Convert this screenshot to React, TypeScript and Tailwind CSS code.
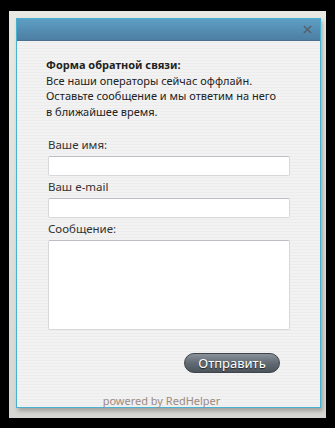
import React from 'react'

const Field = ({ label }: { label: string }): JSX.Element => {
    return (
        <div className="flex flex-col">
            <label className="h-[22px] leading-[22px] text-[11.5px] text-[#333]">{label}</label>
            <input className="h-[20px] w-full bg-white border border-[#d8d8dc] border-t-[#bdbdc4] rounded-[2px] focus:outline-none" />
        </div>
    )
}

const App = (): JSX.Element => {
    return (
        <div className="w-[335px] h-[428px] bg-black pt-[11px] pl-[9px]" style={{ fontFamily: '"Noto Sans", "DejaVu Sans", sans-serif' }}>
            <div className="w-[317px] h-[407px] bg-gradient-to-b from-[#e9e9e4] to-[#d6d6d2] pt-[7px] pl-[7px]">
                <div className="w-[305px] h-[390px] border border-[#4ab0d0] flex flex-col shadow-[2px_3px_4px_rgba(0,0,0,0.25)] bg-[repeating-linear-gradient(to_bottom,#f2f2f2_0px,#f2f2f2_2px,#ececec_2px,#ececec_3px)]">
                    <div className="h-[22px] shrink-0 bg-gradient-to-b from-[#5d9fc4] to-[#4d7ea3] flex justify-end items-center pr-[8px] border-b border-[#4b6f8c]">
                        <svg width="9" height="9" viewBox="0 0 10 10">
                            <path d="M1 1 L9 9 M9 1 L1 9" stroke="#55606a" strokeWidth="1.6" />
                        </svg>
                    </div>

                    <div className="pl-[29px] pr-[16px] pt-[16px] text-[11px] leading-[15.5px] text-[#222]">
                        <div className="font-bold">Форма обратной связи:</div>
                        <div>Все наши операторы сейчас оффлайн.</div>
                        <div>Оставьте сообщение и мы ответим на него</div>
                        <div>в ближайшее время.</div>
                    </div>

                    <div className="pl-[31px] pr-[30px] pt-[15px] flex flex-col">
                        <Field label="Ваше имя:" />
                        <Field label="Ваш e-mail" />
                        <div className="flex flex-col">
                            <label className="h-[22px] leading-[22px] text-[11.5px] text-[#333]">Сообщение:</label>
                            <textarea className="h-[90px] w-full bg-white border border-[#d8d8dc] border-t-[#bdbdc4] rounded-[2px] resize-none focus:outline-none" />
                        </div>
                    </div>

                    <div className="flex justify-end pr-[40px] pt-[23px]">
                        <button className="w-[96px] h-[20px] rounded-full bg-gradient-to-b from-[#8a939c] via-[#626b74] to-[#4c535b] border border-[#3e444a] text-white text-[13px] leading-[18px] [text-shadow:0_1px_1px_rgba(0,0,0,0.6)]">
                            Отправить
                        </button>
                    </div>

                    <div className="mt-auto pb-[0px] text-center text-[11px] leading-[12px] text-[#9b8b82] pr-[14px]">
                        powered by RedHelper
                    </div>
                </div>
            </div>
        </div>
    )
}

export default App
